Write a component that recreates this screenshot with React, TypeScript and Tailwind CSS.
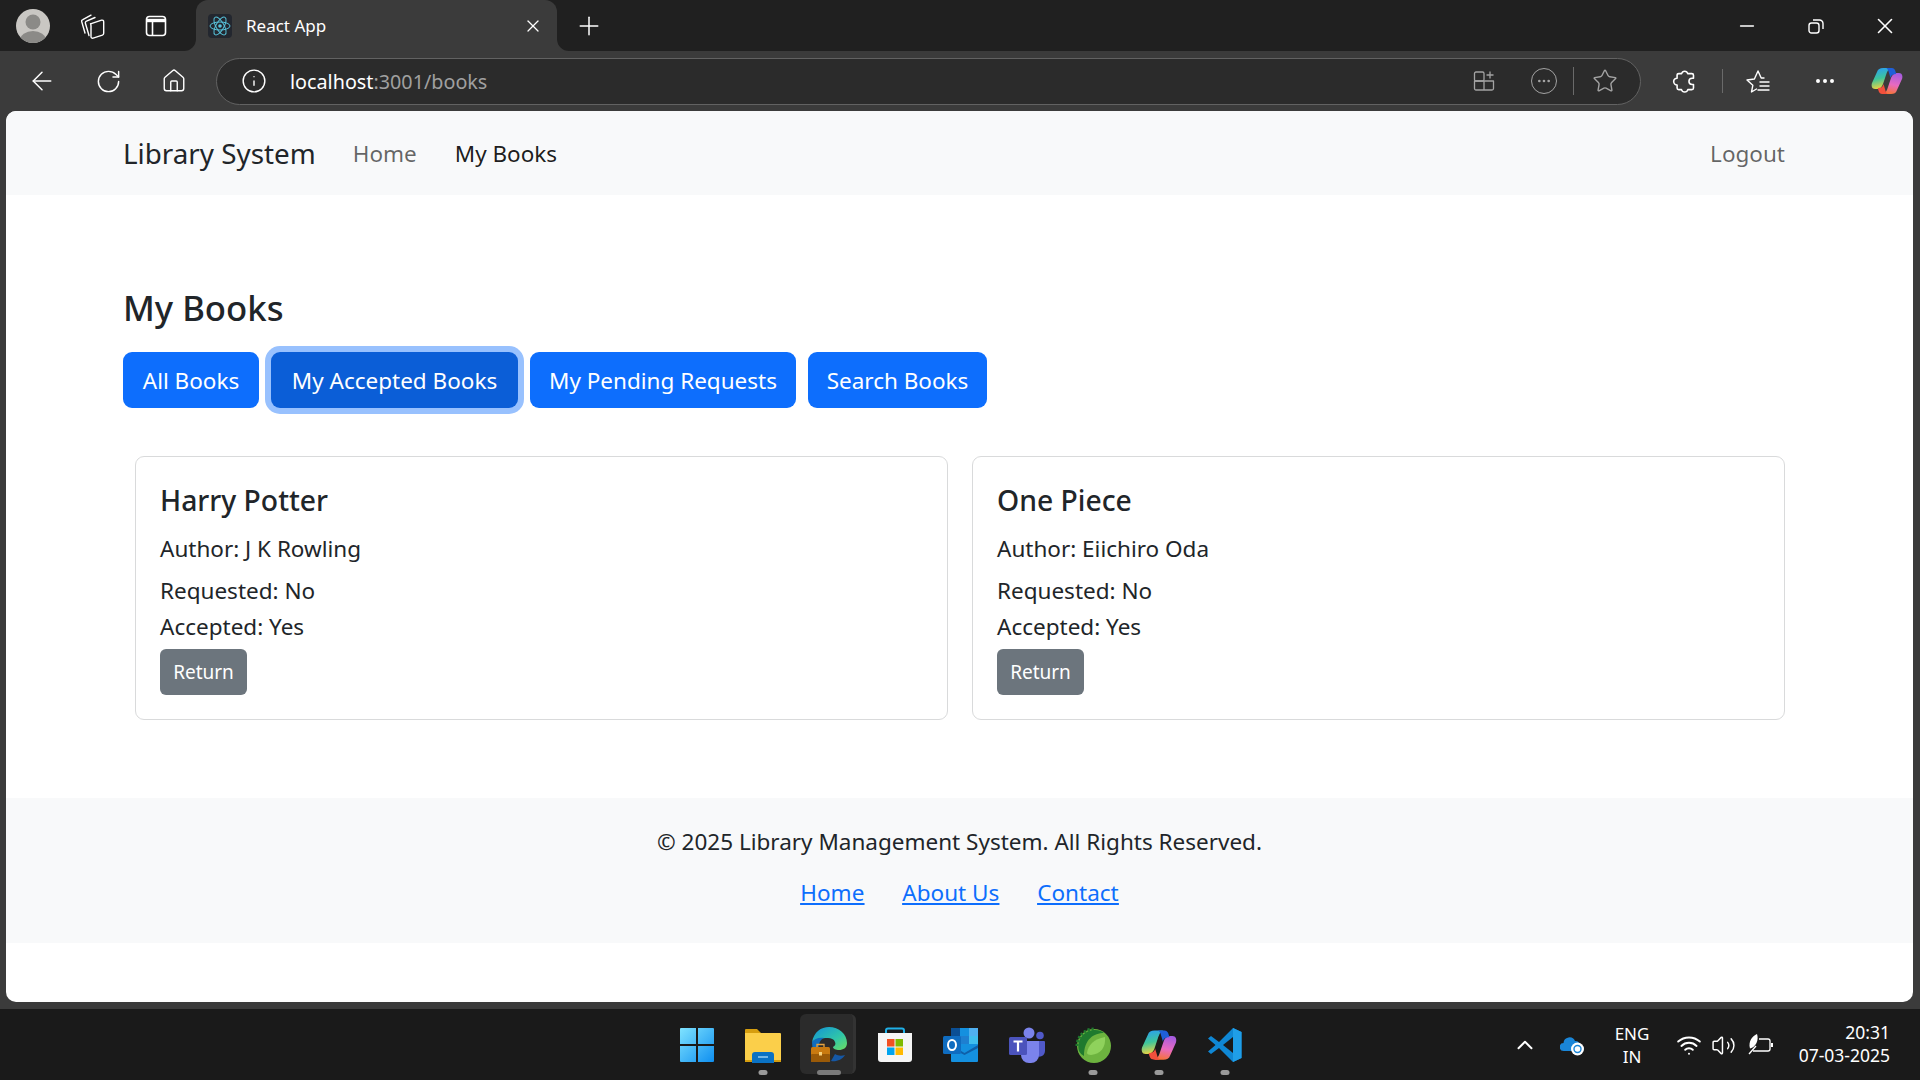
import { ArrowLeft, RotateCw, Home, Info, Star, Ellipsis, X, Plus, Minus, ChevronUp, Wifi, Volume2 } from "lucide-react";

const font = "font-['Noto_Sans',sans-serif]";

const ReactLogo = () => (
  <svg viewBox="0 0 24 24" className="w-6 h-6 bg-[#23272f] rounded-sm" fill="none" stroke="#58c4dc" strokeWidth="1">
    <circle cx="12" cy="12" r="1.8" fill="#58c4dc" stroke="none" />
    <ellipse cx="12" cy="12" rx="10" ry="4" />
    <ellipse cx="12" cy="12" rx="10" ry="4" transform="rotate(60 12 12)" />
    <ellipse cx="12" cy="12" rx="10" ry="4" transform="rotate(120 12 12)" />
  </svg>
);

const Avatar = () => (
  <svg viewBox="0 0 34 34" className="w-[34px] h-[34px] rounded-full bg-[#c9c7c3]">
    <circle cx="17" cy="13" r="7.5" fill="#8b8a87" />
    <ellipse cx="17" cy="31" rx="13" ry="9" fill="#8b8a87" />
  </svg>
);

const Collections = () => (
  <svg viewBox="0 0 26 26" className="w-[26px] h-[26px]" fill="none" stroke="white" strokeWidth="1.4" strokeLinejoin="round" strokeLinecap="round">
    <path d="M5 20 1.7 8.600a1.600 1.600 0 0 1 1.100-2L11 2.200" />
    <path d="M9 22.500 5.400 10.200a1.600 1.600 0 0 1 1.100-2L15 4.500" />
    <path d="M10.500 10.800 21.600 7.200a1.600 1.600 0 0 1 2.100 1.500v11.600a2 2 0 0 1-1.300 1.900l-9.300 3a1.600 1.600 0 0 1-2.100-1.500V12.600a1.900 1.900 0 0 1 0-1.800z" />
  </svg>
);

const TabIcon = () => (
  <svg viewBox="0 0 24 24" className="w-6 h-6" fill="none" stroke="white" strokeWidth="1.6">
    <rect x="2.5" y="2.5" width="19" height="19" rx="3" />
    <path d="M2.500 6.500h19" strokeWidth="3.4" />
    <path d="M8.500 7v14" />
  </svg>
);

const AppsAdd = () => (
  <svg viewBox="0 0 24 24" className="w-6 h-6" fill="none" stroke="#a3a3a3" strokeWidth="1.3" strokeLinejoin="round">
    <rect x="2.5" y="3" width="9.5" height="9" rx="1.5" />
    <path d="M2.500 12H21.500v7.500a1.500 1.500 0 0 1-1.500 1.500H4a1.500 1.500 0 0 1-1.500-1.500zM12 12v9" />
    <path d="M18 2.500v7M14.500 6h7" />
  </svg>
);

const PuzzleIcon = () => (
  <svg viewBox="2 1 23 23" className="w-[26px] h-[26px]" fill="none" stroke="white" strokeWidth="1.4" strokeLinejoin="round">
    <path d="M10.500 6a2.800 2.800 0 0 1 5.400 0h3.600A1.500 1.500 0 0 1 21 7.500V10h-1.200a2.800 2.800 0 0 0 0 5.600H21v3a1.500 1.500 0 0 1-1.500 1.500H16a2.900 2.900 0 0 1-5.600 0H8a1.500 1.500 0 0 1-1.500-1.500V16a3 3 0 0 1 0-6V7.500A1.500 1.500 0 0 1 8 6z" />
  </svg>
);

const FavList = () => (
  <svg viewBox="0 0 26 26" className="w-[26px] h-[26px]" fill="none" stroke="white" strokeWidth="1.4" strokeLinejoin="round" strokeLinecap="round">
    <path d="M11.500 21 6.500 24l1.300-6.700L2 12l7.400-1L13 3l3.200 7h2.800" />
    <path d="M15 14h9M15 18h9M13 22h11" />
  </svg>
);

const Restore = () => (
  <svg viewBox="0 0 16 16" className="w-4 h-4" fill="none" stroke="white" strokeWidth="1.4">
    <rect x="1" y="5" width="10" height="10" rx="2.5" />
    <path d="M5 2h6.500a3.500 3.500 0 0 1 3.500 3.500V11" />
  </svg>
);

const CopilotIcon = ({ size, id }: { size: string; id: string }) => (
  <svg viewBox="0 0 32 32" className={size}>
    <defs>
      <linearGradient id={`${id}A`} x1="0.3" y1="0" x2="0.5" y2="1">
        <stop offset="0" stopColor="#2a9ff0" />
        <stop offset="0.5" stopColor="#3fc59a" />
        <stop offset="1" stopColor="#f5d33c" />
      </linearGradient>
      <linearGradient id={`${id}B`} x1="0.6" y1="0" x2="0.4" y2="1">
        <stop offset="0" stopColor="#a55ce0" />
        <stop offset="0.55" stopColor="#e86ac0" />
        <stop offset="1" stopColor="#f6733a" />
      </linearGradient>
    </defs>
    <path d="M12 3h8c-3 1-4 4-5 7l-3 9c-1 3-3 5-6 5H4c-3 0-4-3-3-6L6 7c1-3 3-4 6-4z" fill={`url(#${id}A)`} />
    <path d="M20 29h-8c3-1 4-4 5-7l3-9c1-3 3-5 6-5h2c3 0 4 3 3 6l-5 11c-1 3-3 4-6 4z" fill={`url(#${id}B)`} />
    <path d="M15 3h5c3 0 4 1 5 5l0 1c-3 0-5 1-5.500 4L18 8c-.500-3-2-5-3-5z" fill="#1f5fd8" />
    <path d="M17 29h-5c-3 0-4-1-5-5l0-1c3 0 5-1 5.500-4L14 24c.500 3 2 5 3 5z" fill="#f2503c" />
  </svg>
);

const WindowsLogo = () => (
  <svg viewBox="0 0 36 36" className="w-9 h-9">
    <defs>
      <linearGradient id="win" x1="0" y1="0" x2="1" y2="1">
        <stop offset="0" stopColor="#7fe3ff" />
        <stop offset="1" stopColor="#0f8ff0" />
      </linearGradient>
    </defs>
    <path d="M1 2a1 1 0 0 1 1-1h15v16H1zM19 1h15a1 1 0 0 1 1 1v15H19zM1 19h16v16H2a1 1 0 0 1-1-1zM19 19h16v15a1 1 0 0 1-1 1H19z" fill="url(#win)" />
  </svg>
);

const FolderIcon = () => (
  <svg viewBox="0 0 36 36" className="w-9 h-9">
    <path d="M0 3a1 1 0 0 1 1-1h11l4 4h-16z" fill="#d69e0f" />
    <path d="M0 6h35a1 1 0 0 1 1 1v27H1a1 1 0 0 1-1-1z" fill="#fbcf4a" />
    <path d="M7 36v-8a3 3 0 0 1 3-3h16a3 3 0 0 1 3 3v8z" fill="#0a72c4" />
    <path d="M13 30h10" stroke="#9fd4f5" strokeWidth="1.4" />
    <path d="M0 33h7v2H0zM29 33h7v2h-7z" fill="#d69e0f" />
  </svg>
);

const EdgeIcon = () => (
  <svg viewBox="0 0 36 36" className="w-9 h-9">
    <defs>
      <linearGradient id="edgeTop" x1="0" y1="0" x2="1" y2="1">
        <stop offset="0" stopColor="#1292d8" />
        <stop offset="0.6" stopColor="#30c6a8" />
        <stop offset="1" stopColor="#6fdc5f" />
      </linearGradient>
    </defs>
    <path d="M1 15C3 5 10 0 18 0c10 0 18 7 18 16 0 5-4 7-8 7-3 0-6-1-6-3 2-1 3-3 2-5-1-3-4-4-7-4-7 0-13 2-16 4z" fill="url(#edgeTop)" />
    <path d="M1 15c2-3 7-5 12-4-4 2-6 6-5 11 1 6 6 11 12 12-9 2-19-5-19-19z" fill="#0f6cbd" />
    <path d="M20 34c5 1 11-1 14-6-3 1-7 1-10-1z" fill="#1558a6" />
    <rect x="0" y="20" width="19" height="15" rx="1.5" fill="#c97a10" />
    <rect x="0" y="27" width="19" height="8" rx="1" fill="#9a5a08" />
    <path d="M6 20v-2.500h7V20" fill="none" stroke="#e6a340" strokeWidth="1.3" />
    <rect x="8" y="25" width="3" height="3.5" fill="#f5cf7a" />
  </svg>
);

const StoreIcon = () => (
  <svg viewBox="0 0 36 36" className="w-9 h-9">
    <path d="M9 7V3.500A2 2 0 0 1 11 1.500h14a2 2 0 0 1 2 2V7" fill="none" stroke="#1fb0e8" strokeWidth="2" />
    <path d="M1 6h34v26a3 3 0 0 1-3 3H4a3 3 0 0 1-3-3z" fill="#f5f5f5" />
    <rect x="10" y="12" width="7.5" height="7.5" fill="#f25022" />
    <rect x="18.5" y="12" width="7.5" height="7.5" fill="#7fba00" />
    <rect x="10" y="20.5" width="7.5" height="7.5" fill="#00a4ef" />
    <rect x="18.5" y="20.5" width="7.5" height="7.5" fill="#ffb900" />
  </svg>
);

const OutlookIcon = () => (
  <svg viewBox="0 0 36 36" className="w-9 h-9">
    <rect x="8" y="1" width="27" height="20" rx="1" fill="#0f6cbd" />
    <rect x="8" y="1" width="9" height="8" fill="#0b4f94" />
    <rect x="17" y="1" width="9" height="8" fill="#1490df" />
    <rect x="26" y="1" width="9" height="8" fill="#50b0f0" />
    <rect x="17" y="9" width="9" height="8" fill="#1e7fd0" />
    <rect x="26" y="9" width="9" height="8" fill="#50d9ff" opacity="0.75" />
    <path d="M8 17h27v17a1 1 0 0 1-1 1H9a1 1 0 0 1-1-1z" fill="#1490df" />
    <path d="M8 18l13.500 8L35 18v3l-13.500 7L8 21z" fill="#0f5fa8" />
    <rect x="0" y="9" width="18" height="18" rx="1.5" fill="#0f6cc0" />
    <ellipse cx="9" cy="18" rx="4" ry="5" fill="none" stroke="white" strokeWidth="2" />
  </svg>
);

const TeamsIcon = () => (
  <svg viewBox="0 0 36 36" className="w-9 h-9">
    <circle cx="20" cy="6" r="5.5" fill="#7b83eb" />
    <circle cx="31" cy="8.5" r="3.8" fill="#5059c9" />
    <path d="M27 14h8a1 1 0 0 1 1 1v9a6 6 0 0 1-9 5z" fill="#5059c9" />
    <path d="M12 14h18v14a8 8 0 0 1-8 8h-2a8 8 0 0 1-8-8z" fill="#7b83eb" />
    <rect x="0" y="10" width="18" height="18" rx="1.5" fill="#4b53bc" />
    <path d="M4.500 14.500h9M9 14.500v10" stroke="white" strokeWidth="2.2" fill="none" />
  </svg>
);

const SpringIcon = () => (
  <svg viewBox="0 0 36 36" className="w-9 h-9">
    <circle cx="19" cy="19" r="17" fill="#6db33f" />
    <path d="M2 19a17 17 0 0 1 17-17" fill="none" stroke="#1f7a2e" strokeWidth="3" strokeDasharray="2.2 1.8" />
    <path d="M4 24C1 12 10 3 20 3c4 0 7 1 9 3C19 6 9 12 9 29c-2-1-4-3-5-5z" fill="#1f7a2e" />
    <path d="M30 10c1 10-4 17-14 18-2 0-4-1-4-2 1-8 7-14 18-16z" fill="#8fd25c" />
  </svg>
);

const VSCodeIcon = () => (
  <svg viewBox="0 0 36 36" className="w-9 h-9">
    <path d="M26 1 34.500 5v26L26 35 12 21l-8 6-3-2.500L8.500 18 1 11.500 4 9l8 6z" fill="#0f87d4" />
    <path d="M26 1 34.500 5v26L26 35z" fill="#1f9ee8" />
    <path d="M26 10v16l-10-8z" fill="#1a1a1a" />
  </svg>
);

const CloudIcon = () => (
  <svg viewBox="0 0 26 26" className="w-[26px] h-[26px]">
    <path d="M4 19a4 4 0 0 1-.500-8A6 6 0 0 1 15 9a4.500 4.500 0 0 1 5 5v5z" fill="#1a86d8" />
    <circle cx="17.5" cy="17" r="6.5" fill="white" />
    <circle cx="17.5" cy="17" r="3.5" fill="none" stroke="#1a86d8" strokeWidth="1.4" />
  </svg>
);

const BatteryLeaf = () => (
  <svg viewBox="0 0 26 22" className="w-[26px] h-[22px]" fill="none" stroke="white" strokeWidth="1.3">
    <path d="M11 5h9a2 2 0 0 1 2 2v8a2 2 0 0 1-2 2H5" />
    <path d="M24 9v4" strokeWidth="2" />
    <path d="M2 14.500C0 8 4 2 9 0c2 6-1 13-7 14.500z" fill="white" stroke="none" />
    <path d="M1 20l7-8" />
  </svg>
);

const TabCorner = ({ side }: { side: "left" | "right" }) => (
  <svg viewBox="0 0 12 12" className={`absolute bottom-0 w-3 h-3 ${side === "left" ? "-left-3" : "-right-3 -scale-x-100"}`}>
    <path d="M12 0v12H0A12 12 0 0 0 12 0z" fill="#3b3b3b" />
  </svg>
);

const TaskbarItem = ({ children, dot, active }: { children: React.ReactNode; dot?: boolean; active?: boolean }) => (
  <div className="relative w-[66px] h-[70px] flex items-center justify-center">
    {active && <div className="absolute left-[4px] top-[4px] w-[56px] h-[60px] rounded-md bg-[#2b2b2b] border-r-[3px] border-[#333]" />}
    <div className="relative -mt-[1px]">{children}</div>
    {dot && <div className="absolute bottom-[5px] left-1/2 -translate-x-1/2 w-[9px] h-[5px] rounded-full bg-[#9a9a9a]" />}
    {active && <div className="absolute bottom-[5px] left-1/2 -translate-x-1/2 w-[24px] h-[5px] rounded-full bg-[#7a7a7a]" />}
  </div>
);

const BookCard = ({ title, author }: { title: string; author: string }) => (
  <div className="flex-1 h-[264px] border border-[#d9dadb] rounded-[9px] p-6 bg-white">
    <h5 className="text-[28.3px] leading-9 font-medium text-[#212529] mb-[14px] pt-[1px]">{title}</h5>
    <p className="text-[22.5px] leading-9 mb-[5px] -mt-[1px]">Author: {author}</p>
    <p className="text-[22.5px] leading-9 pt-[1px]">Requested: No</p>
    <p className="text-[22.5px] leading-9 mb-[4px]">Accepted: Yes</p>
    <button className="h-[46px] w-[87px] rounded-[6px] bg-[#6c757d] text-white text-[19px]">Return</button>
  </div>
);

const navButtons = [
  { label: "All Books", className: "w-[136px] bg-[#0d6efd]" },
  { label: "My Accepted Books", className: "w-[247px] bg-[#0b5ed7] ring-[6px] ring-[#98c1fe]" },
  { label: "My Pending Requests", className: "w-[266px] bg-[#0d6efd]" },
  { label: "Search Books", className: "w-[179px] bg-[#0d6efd]" },
];

export default function App() {
  return (
    <div className={`w-[1920px] h-[1080px] overflow-hidden bg-[#3b3b3b] flex flex-col ${font}`}>
      {/* tab strip */}
      <div className="h-[51px] bg-[#202020] flex items-center text-white shrink-0">
        <div className="w-[196px] flex items-center">
          <div className="w-[66px] flex justify-center"><Avatar /></div>
          <div className="w-[54px] flex justify-center"><Collections /></div>
          <div className="w-[72px] flex justify-center"><TabIcon /></div>
        </div>
        <div className="relative w-[361px] h-[51px] bg-[#3b3b3b] rounded-t-[12px] flex items-center pl-[12px] pr-[14px] gap-[14px]">
          <TabCorner side="left" />
          <ReactLogo />
          <span className="text-[17px] flex-1">React App</span>
          <X size={20} strokeWidth={1.5} />
          <TabCorner side="right" />
        </div>
        <div className="w-[64px] flex justify-center"><Plus size={30} strokeWidth={1.2} /></div>
        <div className="ml-auto flex items-center">
          <div className="w-[69px] flex justify-center"><Minus size={22} strokeWidth={1.6} /></div>
          <div className="w-[69px] flex justify-center"><Restore /></div>
          <div className="w-[70px] flex justify-center"><X size={26} strokeWidth={1.5} /></div>
        </div>
      </div>
      {/* toolbar */}
      <div className="h-[60px] flex items-center text-white shrink-0">
        <div className="w-[216px] flex items-center pl-[9px]">
          <div className="w-[66px] flex justify-center"><ArrowLeft size={30} strokeWidth={1.2} /></div>
          <div className="w-[66px] flex justify-center"><RotateCw size={27} strokeWidth={1.3} /></div>
          <div className="w-[66px] flex justify-center"><Home size={26} strokeWidth={1.3} /></div>
        </div>
        <div className="w-[1425px] h-[47px] rounded-full bg-[#2b2b2b] border border-[#626262] flex items-center pl-[24px] pr-[22px]">
          <Info size={26} strokeWidth={1.3} />
          <span className="ml-[23px] text-[19.75px] mt-[1px]">localhost<span className="text-[#a0a0a0]">:3001/books</span></span>
          <div className="ml-auto flex items-center">
            <AppsAdd />
            <div className="ml-[35px] w-[26px] h-[26px] rounded-full border border-[#a3a3a3] flex items-center justify-center text-[#a3a3a3]"><Ellipsis size={16} /></div>
            <div className="w-px h-[28px] bg-[#6a6a6a] ml-[16px] mr-[18px]" />
            <Star size={26} strokeWidth={1.3} className="text-[#a3a3a3]" />
          </div>
        </div>
        <div className="flex-1 flex items-center pl-[31px]">
          <PuzzleIcon />
          <div className="w-px h-[24px] bg-[#6a6a6a] ml-[24px] mr-[22px]" />
          <FavList />
          <div className="w-[66px] flex justify-center ml-[21px]"><Ellipsis size={24} /></div>
          <div className="ml-[13px]"><CopilotIcon size="w-8 h-8" id="copTop" /></div>
        </div>
      </div>
      {/* page */}
      <div className="h-[891px] mx-[6px] w-[1907px] bg-white rounded-[10px] overflow-hidden text-[#212529] shrink-0">
        <nav className="h-[84px] bg-[#f8f9fa] flex items-center pl-[117px] pr-[128px] text-[22.5px]">
          <span className="text-[27.8px] mr-[37px] mt-[2px]">Library System</span>
          <a className="text-[#00000099] mr-[38px] mt-[2px]">Home</a>
          <a className="text-[#000000e6] mt-[2px]">My Books</a>
          <a className="ml-auto text-[#00000099] mt-[2px]">Logout</a>
        </nav>
        <div className="pl-[117px] pr-[128px] pt-[92px]">
          <h4 className="text-[34.7px] leading-[43px] font-medium mb-[22px] -mt-[1px] pb-[1px]">My Books</h4>
          <div className="flex gap-3">
            {navButtons.map((item) => (
              <button
                key={item.label}
                className={`h-[56px] pt-[2px] rounded-[9px] text-[22.5px] text-white ${item.className}`}
              >
                {item.label}
              </button>
            ))}
          </div>
          <div className="flex gap-6 mt-12 pl-3">
            <BookCard title="Harry Potter" author="J K Rowling" />
            <BookCard title="One Piece" author="Eiichiro Oda" />
          </div>
        </div>
        <footer className="h-[145px] mt-[78px] bg-[#f8f9fa] flex flex-col items-center pt-[26px] text-[22.5px]">
          <p className="leading-9 mb-[15px]">© 2025 Library Management System. All Rights Reserved.</p>
          <div className="flex gap-[38px] leading-9 text-[#0d6efd] underline">
            <a>Home</a>
            <a>About Us</a>
            <a>Contact</a>
          </div>
        </footer>
      </div>
      {/* taskbar */}
      <div className="mt-[7px] h-[71px] bg-[#1a1a1a] flex items-end text-white shrink-0">
        <div className="flex pl-[664px]">
          <TaskbarItem><WindowsLogo /></TaskbarItem>
          <TaskbarItem dot><FolderIcon /></TaskbarItem>
          <TaskbarItem active><EdgeIcon /></TaskbarItem>
          <TaskbarItem><StoreIcon /></TaskbarItem>
          <TaskbarItem><OutlookIcon /></TaskbarItem>
          <TaskbarItem><TeamsIcon /></TaskbarItem>
          <TaskbarItem dot><SpringIcon /></TaskbarItem>
          <TaskbarItem dot><CopilotIcon size="w-9 h-9" id="copBar" /></TaskbarItem>
          <TaskbarItem dot><VSCodeIcon /></TaskbarItem>
        </div>
        <div className="ml-auto h-[70px] flex items-center pr-[30px]">
          <ChevronUp size={26} strokeWidth={1.8} />
          <div className="ml-[22px]"><CloudIcon /></div>
          <div className="w-[56px] ml-[18px] text-center text-[17px] leading-[23px]">ENG<br />IN</div>
          <Wifi size={26} strokeWidth={1.8} className="ml-[16px]" />
          <Volume2 size={25} strokeWidth={1.4} className="ml-[9px]" />
          <div className="ml-[12px]"><BatteryLeaf /></div>
          <div className="w-[100px] ml-[16px] -mt-[2px] text-right text-[17.5px] leading-[23px]">20:31<br />07-03-2025</div>
        </div>
      </div>
    </div>
  );
}
